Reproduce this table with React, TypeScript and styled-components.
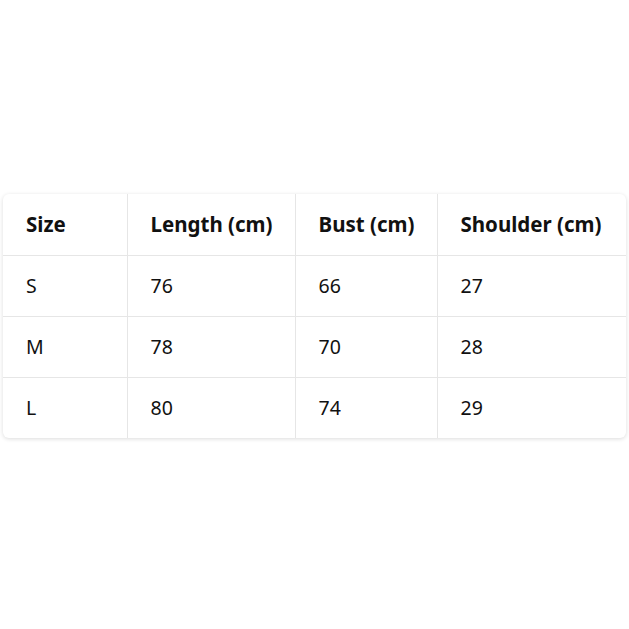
import React from "react";
import styled, { createGlobalStyle } from "styled-components";

const GlobalStyle = createGlobalStyle`
    html, body {
        margin: 0;
        padding: 0;
        background: #ffffff;
    }
    body {
        font-family: "Noto Sans", "Open Sans", sans-serif;
        color: #111111;
    }
`

const Page = styled.div`
    height: 629px;
    display: flex;
    align-items: center;
    padding: 3px 3px 0;
    box-sizing: border-box;
`

const Card = styled.div`
    width: 100%;
    background: #ffffff;
    border-radius: 6px;
    box-shadow: 0 1px 4px rgba(0, 0, 0, 0.14);
    overflow: hidden;
`

const Table = styled.table`
    width: 100%;
    border-collapse: collapse;
    table-layout: fixed;
    font-size: 19.5px;
`

const Cell = styled.td<{ $head?: boolean }>`
    height: 61px;
    padding: 0 0 0 23px;
    box-sizing: border-box;
    text-align: left;
    white-space: nowrap;
    font-size: ${p => (p.$head ? "20.5px" : "19.5px")};
    font-weight: ${p => (p.$head ? 700 : 400)};
    border-right: 1px solid #e6e6e6;
    border-bottom: 1px solid #e6e6e6;
    &:last-child { border-right: none; }
    tbody tr:last-child > & { border-bottom: none; }
`

const columns = [
    { label: "Size", width: 124 },
    { label: "Length (cm)", width: 168 },
    { label: "Bust (cm)", width: 142 },
    { label: "Shoulder (cm)", width: 189 },
]

const rows = [
    ["S", "76", "66", "27"],
    ["M", "78", "70", "28"],
    ["L", "80", "74", "29"],
]

export default function App() {
    return <>
        <GlobalStyle />
        <Page>
            <Card>
                <Table>
                    <colgroup>
                        {columns.map(c => <col key={c.label} style={{ width: c.width }} />)}
                    </colgroup>
                    <thead>
                        <tr>
                            {columns.map(c => <Cell as="th" $head key={c.label}>{c.label}</Cell>)}
                        </tr>
                    </thead>
                    <tbody>
                        {rows.map(r => <tr key={r[0]}>
                            {r.map((v, i) => <Cell key={i}>{v}</Cell>)}
                        </tr>)}
                    </tbody>
                </Table>
            </Card>
        </Page>
    </>
}
